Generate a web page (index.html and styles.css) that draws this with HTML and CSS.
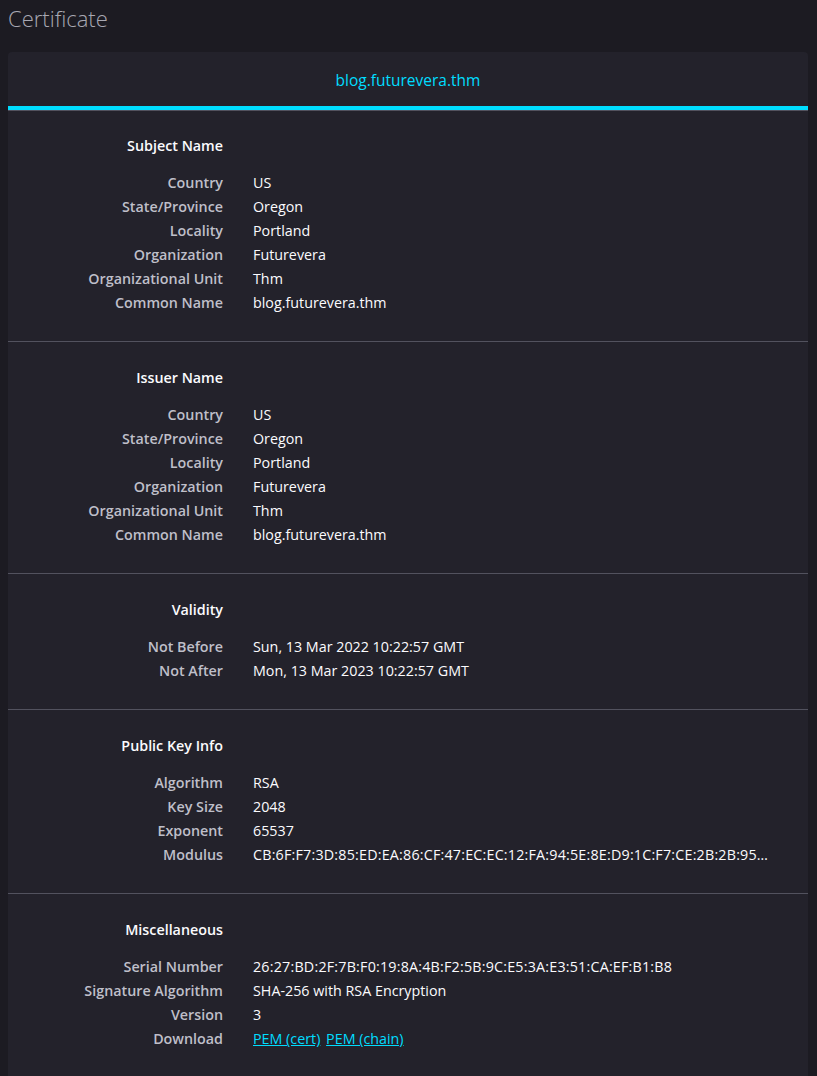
FILE: index.html
```html
<!DOCTYPE html>
<html>
<head>
<meta charset="utf-8">
<link rel="stylesheet" href="styles.css">
</head>
<body>
<h1 class="title">Certificate</h1>
<div class="card">
  <div class="tabs">
    <div class="tab">blog.futurevera.thm</div>
  </div>
  <section class="sect">
    <div class="head">Subject Name</div>
    <div class="rows">
      <div class="lbl">Country</div><div class="val">US</div>
      <div class="lbl">State/Province</div><div class="val">Oregon</div>
      <div class="lbl">Locality</div><div class="val">Portland</div>
      <div class="lbl">Organization</div><div class="val">Futurevera</div>
      <div class="lbl">Organizational Unit</div><div class="val">Thm</div>
      <div class="lbl">Common Name</div><div class="val">blog.futurevera.thm</div>
    </div>
  </section>
  <section class="sect">
    <div class="head">Issuer Name</div>
    <div class="rows">
      <div class="lbl">Country</div><div class="val">US</div>
      <div class="lbl">State/Province</div><div class="val">Oregon</div>
      <div class="lbl">Locality</div><div class="val">Portland</div>
      <div class="lbl">Organization</div><div class="val">Futurevera</div>
      <div class="lbl">Organizational Unit</div><div class="val">Thm</div>
      <div class="lbl">Common Name</div><div class="val">blog.futurevera.thm</div>
    </div>
  </section>
  <section class="sect">
    <div class="head">Validity</div>
    <div class="rows">
      <div class="lbl">Not Before</div><div class="val">Sun, 13 Mar 2022 10:22:57 GMT</div>
      <div class="lbl">Not After</div><div class="val">Mon, 13 Mar 2023 10:22:57 GMT</div>
    </div>
  </section>
  <section class="sect">
    <div class="head">Public Key Info</div>
    <div class="rows">
      <div class="lbl">Algorithm</div><div class="val">RSA</div>
      <div class="lbl">Key Size</div><div class="val">2048</div>
      <div class="lbl">Exponent</div><div class="val">65537</div>
      <div class="lbl">Modulus</div><div class="val hex">CB:6F:F7:3D:85:ED:EA:86:CF:47:EC:EC:12:FA:94:5E:8E:D9:1C:F7:CE:2B:2B:95…</div>
    </div>
  </section>
  <section class="sect">
    <div class="head">Miscellaneous</div>
    <div class="rows">
      <div class="lbl">Serial Number</div><div class="val hex">26:27:BD:2F:7B:F0:19:8A:4B:F2:5B:9C:E5:3A:E3:51:CA:EF:B1:B8</div>
      <div class="lbl">Signature Algorithm</div><div class="val">SHA-256 with RSA Encryption</div>
      <div class="lbl">Version</div><div class="val">3</div>
      <div class="lbl">Download</div><div class="val"><a href="#" class="lnk">PEM (cert)</a> <a href="#" class="lnk">PEM (chain)</a></div>
    </div>
  </section>
</div>
</body>
</html>
```

FILE: styles.css
```css
html, body {
  background: #1c1b22;
}
body {
  margin: 0;
  padding: 0 9px 0 8px;
  font-family: "Open Sans", "Noto Sans", sans-serif;
  color: #fbfbfe;
  font-size: 14.3px;
}
.title {
  margin: 0;
  padding: 3px 0 0 0;
  height: 52px;
  box-sizing: border-box;
  font-size: 22px;
  font-weight: 300;
  line-height: 30px;
  color: #a8a8b2;
}
.card {
  background: #23222b;
  border-radius: 4px 4px 0 0;
}
.tabs {
  height: 59px;
  border-bottom: 1px solid #52525e;
  box-sizing: border-box;
  display: flex;
}
.tab {
  flex: 1;
  display: flex;
  align-items: center;
  justify-content: center;
  color: #00ddff;
  font-size: 15.5px;
  border-bottom: 4px solid #00ddff;
  padding-top: 2px;
}
.sect {
  border-bottom: 1px solid #52525e;
  padding: 24px 28px 26px 0;
}
.sect:first-of-type {
  padding-top: 23px;
}
.head, .lbl {
  width: 215px;
  text-align: right;
  font-weight: 600;
}
.head {
  line-height: 24px;
  margin-bottom: 13px;
}
.rows {
  display: grid;
  grid-template-columns: 215px minmax(0, 1fr);
  column-gap: 30px;
  line-height: 24px;
}
.lbl {
  color: #bfbfc9;
}
.val {
  white-space: nowrap;
}
.hex {
  letter-spacing: 0.2px;
}
.lnk {
  color: #00ddff;
  text-decoration: underline;
  margin-right: 2px;
}
```
